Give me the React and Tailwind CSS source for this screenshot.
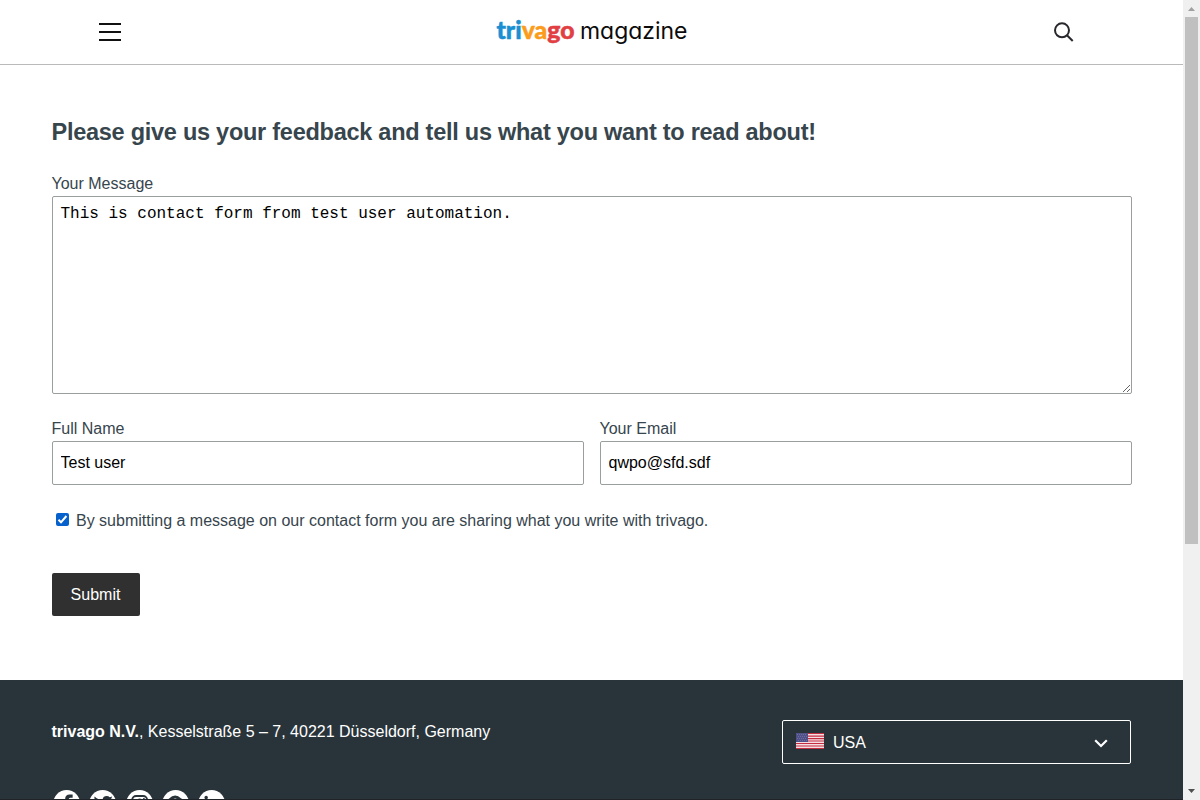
import React from "react";

function Logo() {
  return (
    <svg className="block h-[34px] w-[194px] overflow-visible" viewBox="0 0 194 34" role="img" aria-label="trivago magazine">
      <text x="1.5" y="23.5" textLength="78" lengthAdjust="spacingAndGlyphs" fontSize="24.5" strokeWidth="0.5" className="[font-family:Lato,sans-serif] [font-weight:900]">
        <tspan fill="#1a8fd1" stroke="#1a8fd1">tri</tspan><tspan fill="#fb9c1c" stroke="#fb9c1c">va</tspan><tspan fill="#e13f43" stroke="#e13f43">go</tspan>
      </text>
      <text x="85" y="23.5" textLength="107.5" lengthAdjust="spacingAndGlyphs" fontSize="23" fill="#0b0b0b" className="[font-family:Inter,sans-serif] [font-weight:400] [font-feature-settings:'cv11']">magazine</text>
    </svg>
  );
}

function Header() {
  return (
    <header className="flex h-[65px] shrink-0 items-start justify-between border-b border-[#bababa] pl-[99px] pr-[109px]">
      <button className="mt-[23px] flex w-[22px] flex-col gap-[6px]" aria-label="Menu">
        <span className="h-[2px] w-full bg-[#111]" />
        <span className="h-[2px] w-full bg-[#111]" />
        <span className="h-[2px] w-full bg-[#111]" />
      </button>
      <div className="ml-[8px] mt-[15px]"><Logo /></div>
      <button className="mt-[22px]" aria-label="Search">
        <svg className="block h-5 w-5" viewBox="0 0 20 20" fill="none" stroke="#27272c" strokeWidth="2">
          <circle cx="8" cy="8.3" r="7" />
          <path d="M13 13.3 18.7 19" />
        </svg>
      </button>
    </header>
  );
}

function Field({ label, value }) {
  return (
    <label className="flex flex-1 flex-col">
      <span className="-ml-[0.5px] h-[23px] leading-[22px]">{label}</span>
      <input className="h-11 w-full rounded-xs border border-[#999e9f] bg-white px-[7.5px] text-black outline-none" defaultValue={value} />
    </label>
  );
}

function ContactForm() {
  return (
    <main className="h-[615px] shrink-0 pl-[52px] pr-[51px] pt-[53px] text-[#37454d]">
      <h1 className="-ml-[0.5px] text-[23.5px] font-bold leading-[28px] tracking-[-0.26px]">Please give us your feedback and tell us what you want to read about!</h1>
      <label className="-ml-[0.5px] mt-[27px] block h-[23px] leading-[22px]" htmlFor="message">Your Message</label>
      <textarea id="message" className="block h-[198px] w-full resize rounded-xs border border-[#999e9f] px-[7.5px] py-[7px] font-['Liberation_Mono',monospace] text-[16px] leading-[20px] text-black outline-none" defaultValue="This is contact form from test user automation." />
      <div className="mt-6 flex gap-4">
        <Field label="Full Name" value="Test user" />
        <Field label="Your Email" value="qwpo@sfd.sdf" />
      </div>
      <label className="mt-[25px] flex h-5 items-start pl-1 leading-[22px]">
        <span className="mr-[7px] mt-[3px] flex h-[13px] w-[13px] items-center justify-center rounded-xs bg-[#0661cc]">
          <svg className="h-[13px] w-[13px]" viewBox="0 0 13 13" fill="none" stroke="white" strokeWidth="2"><path d="M2.5 6.8 5 9.3 10.4 3" /></svg>
        </span>
        By submitting a message on our contact form you are sharing what you write with trivago.
      </label>
      <button className="mt-[43px] h-[43px] w-[88px] rounded-xs bg-[#303030] pr-px text-white">Submit</button>
    </main>
  );
}

function Flag() {
  return (
    <svg className="block h-4 w-7" viewBox="0 0 28 16">
      <path fill="#f5dfe2" d="M0 0h28v16H0z" />
      <path fill="#c52d40" d="M0 0h28v1H0zM0 2.5h28v1.2H0zM0 5h28v1.2H0zM0 10h28v1H0zM0 12.5h28v1H0zM0 15h28v1H0z" />
      <path fill="#dc8793" d="M0 7h28v2H0z" />
      <path fill="#51518a" d="M0 0h12v9H0z" />
      <path stroke="#8886ab" strokeWidth=".7" strokeDasharray=".8 1.2" d="M1 1.5h10M2 3.5h9M1 5.5h10M2 7.5h9" />
    </svg>
  );
}

const iconPaths = [
  <path key="f" d="M12 27V16H9v-4h3V9q0-4.500 4.500-4.500h3v3.300h-2q-2 0-2 2v2h4l-1 4h-3v11" fill="#29343a" />,
  <path key="t" d="M5 19q3 .3 5-1.500-3-.5-4-3h2q-3-1.500-3-4.500l2 .6Q4.500 9 5.500 6.500q3.500 3.500 8 3.500 0-4 4-4 2 0 3 1.300L23 6.500l-1 2.500 1.500-.3L21.500 11Q21 21 11 21q-4 0-6-2" fill="#29343a" />,
  <g key="i" fill="none" stroke="#29343a" strokeWidth="1.8"><rect x="6" y="6" width="15" height="15" rx="4" /><circle cx="13.500" cy="13.500" r="4" /><path d="M17 9h1.500" /></g>,
  <path key="p" d="M11 24l3-11M9 17Q5 13 8 9.500 13 4.500 18 9.500 21 12 19 16q-3 4-6 0" fill="none" stroke="#29343a" strokeWidth="3" />,
  <g key="l" fill="#29343a"><circle cx="8" cy="7.500" r="1.700" /><path d="M6.500 11h3v10h-3zM12 10.500h3v1.500q4-3.500 6 1V21h-3v-6q-1-2.500-3 0v6h-3z" /></g>,
];

function Footer() {
  return (
    <footer className="min-h-0 flex-1 overflow-hidden border-b border-[#202429] bg-[#29343a] px-[52px] pt-10 text-white">
      <div className="flex h-[70px] items-start justify-between">
        <p className="-ml-[0.5px] mt-[2px] leading-[20px]"><b>trivago N.V.</b>, Kesselstraße 5 – 7, 40221 Düsseldorf, Germany</p>
        <button className="flex h-11 w-[349px] items-center rounded-xs border border-white pl-[13px] pr-[22px]">
          <span className="mb-[2px]"><Flag /></span>
          <span className="ml-[9px] mt-[2px] flex-1 text-left">USA</span>
          <svg className="mt-[2px] h-[9px] w-[14px]" viewBox="0 0 14 9" fill="none" stroke="white" strokeWidth="2.2"><path d="m1.2 1.2 5.8 5.8 5.8-5.8" /></svg>
        </button>
      </div>
      <div className="ml-[1px] flex gap-[9px]">
        {iconPaths.map((icon, i) => (
          <svg key={i} className="h-[27px] w-[27.3px] shrink-0" viewBox="0 0 27 27"><circle cx="13.5" cy="13.5" r="13.5" fill="white" />{icon}</svg>
        ))}
      </div>
    </footer>
  );
}

function Scrollbar() {
  return (
    <aside className="flex h-full w-[17px] flex-col items-center bg-[#f0f0f0]" aria-hidden="true">
      <svg className="h-[17px] w-[17px] shrink-0" viewBox="0 0 17 17"><path d="M5 11 8.5 7 12 11z" fill="#a0a0a0" /></svg>
      <div className="-ml-px h-[527px] w-[13px] shrink-0 bg-[#c0c0c0]" />
      <svg className="mt-auto h-[17px] w-[17px] shrink-0" viewBox="0 0 17 17"><path d="M5 6h7L8.5 10z" fill="#505050" /></svg>
    </aside>
  );
}

export default function App() {
  return (
    <div className="flex h-screen w-full overflow-hidden bg-white font-['Liberation_Sans',sans-serif] text-[16px]">
      <div className="flex min-w-0 flex-1 flex-col"><Header /><ContactForm /><Footer /></div>
      <Scrollbar />
    </div>
  );
}
